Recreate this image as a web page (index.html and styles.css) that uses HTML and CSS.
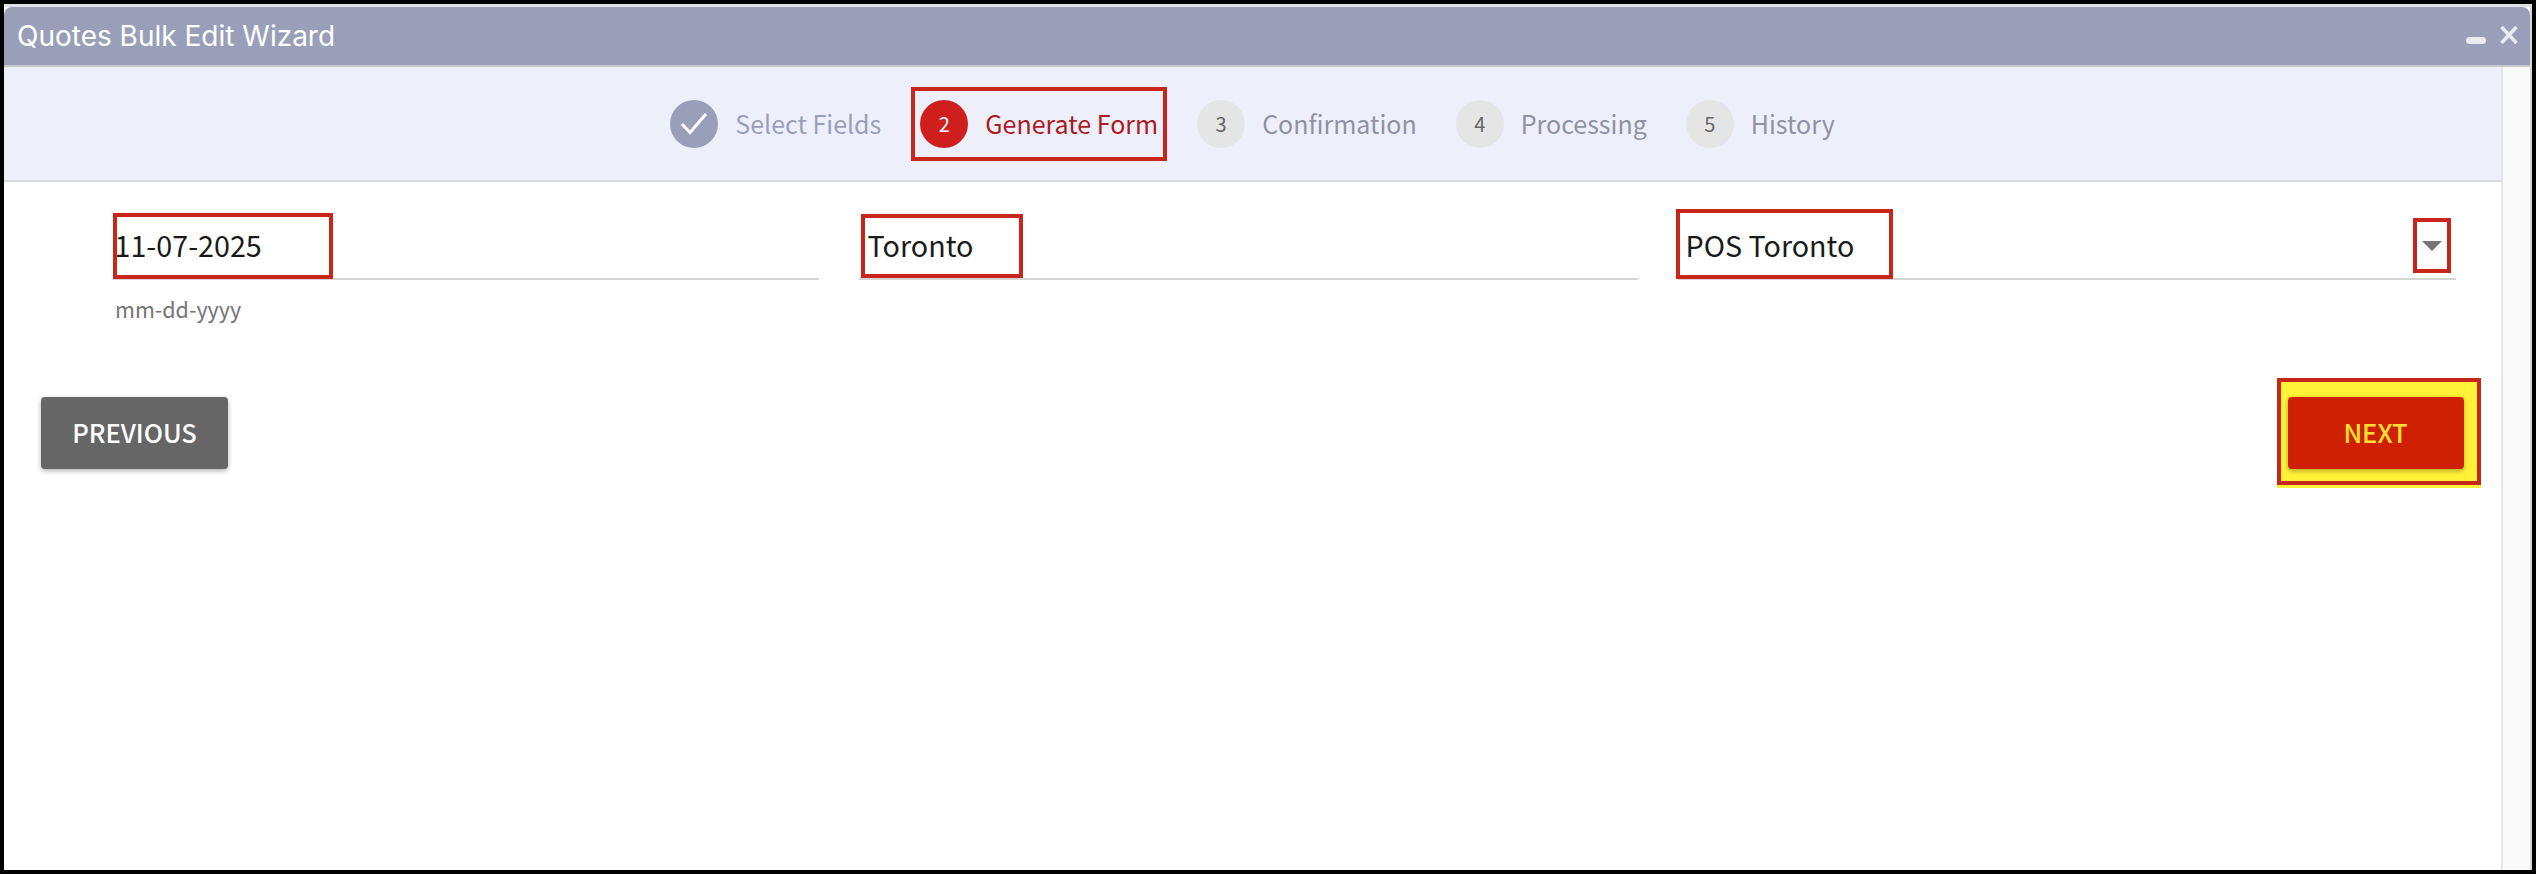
FILE: index.html
```html
<!DOCTYPE html>
<html lang="en">
<head>
<meta charset="utf-8">
<title>Quotes Bulk Edit Wizard</title>
<link rel="stylesheet" href="styles.css">
</head>
<body>
<div class="window">
  <header class="titlebar">
    <span class="title">Quotes Bulk Edit Wizard</span>
    <div class="win-actions">
      <span class="win-min"></span>
      <svg class="win-close" width="18" height="20" viewBox="0 0 18 20"><path d="M1.5 2 L16.5 18 M16.5 2 L1.5 18" fill="none" stroke="#e9ebf1" stroke-width="3.4"/></svg>
    </div>
  </header>
  <div class="frame">
    <main class="content">
      <nav class="stepper">
        <div class="step done">
          <span class="dot"><svg width="28" height="23" viewBox="0 0 28 23"><path d="M2 12 L10 20.5 L26 2" fill="none" stroke="#fff" stroke-width="3"/></svg></span>
          <span class="label">Select Fields</span>
        </div>
        <div class="step active mark-step">
          <span class="dot">2</span>
          <span class="label">Generate Form</span>
        </div>
        <div class="step">
          <span class="dot">3</span>
          <span class="label">Confirmation</span>
        </div>
        <div class="step">
          <span class="dot">4</span>
          <span class="label">Processing</span>
        </div>
        <div class="step">
          <span class="dot">5</span>
          <span class="label">History</span>
        </div>
      </nav>
      <section class="form">
        <div class="field">
          <div class="control">
            <span class="mark mark-date">11-07-2025</span>
          </div>
          <div class="hint">mm-dd-yyyy</div>
        </div>
        <div class="field">
          <div class="control">
            <span class="mark mark-city">Toronto</span>
          </div>
        </div>
        <div class="field">
          <div class="control select">
            <span class="mark mark-pos">POS Toronto</span>
            <span class="mark mark-arrow"><span class="caret"></span></span>
          </div>
        </div>
      </section>
      <div class="actions">
        <button class="btn btn-prev" type="button">PREVIOUS</button>
        <div class="next-mark">
          <button class="btn btn-next" type="button">NEXT</button>
        </div>
      </div>
    </main>
    <aside class="scrollbar"></aside>
  </div>
</div>
</body>
</html>
```
FILE: styles.css
```css
* { box-sizing: border-box; }
html, body { height: 100%; }
body {
  margin: 0;
  padding: 4px;
  background: #000;
  overflow: hidden;
  font-family: "Noto Sans CJK SC", "Noto Sans", sans-serif;
}
.window {
  height: 866px;
  display: flex;
  flex-direction: column;
  background: #fff;
  border-top: 3px solid #dfe0e4;
  border-right: 2px solid #d8d8d8;
}
.titlebar {
  height: 60px;
  flex: none;
  display: flex;
  align-items: center;
  justify-content: space-between;
  padding: 0 12px 0 13px;
  background: #9a9fb9;
  border-bottom: 2px solid #c6c8cc;
  border-radius: 8px 8px 0 0;
}
.title {
  font-family: Inter, sans-serif;
  font-size: 28px;
  color: #fff;
}
.win-actions { display: flex; align-items: center; gap: 14px; }
.win-min {
  width: 20px;
  height: 7px;
  margin-top: 8px;
  border-radius: 4px;
  background: #e9ebf1;
}
.win-close { margin-top: -3px; }
.frame { flex: 1; display: flex; min-height: 0; }
.content { flex: 1; min-width: 0; display: flex; flex-direction: column; }
.scrollbar {
  width: 29px;
  flex: none;
  background: #fafafa;
  border-left: 2px solid #e6e6e6;
}
.stepper {
  height: 115px;
  flex: none;
  display: flex;
  align-items: center;
  justify-content: center;
  gap: 21px;
  background: #edf0fb;
  border-bottom: 2px solid #d8d9dd;
}
.step {
  display: flex;
  align-items: center;
  gap: 17px;
  padding: 9px 5px;
  border: 4px solid transparent;
}
.dot {
  width: 48px;
  height: 48px;
  flex: none;
  display: flex;
  align-items: center;
  justify-content: center;
  border-radius: 50%;
  background: #e5e5e5;
  color: #666;
  font-size: 20px;
}
.label { font-size: 25px; line-height: 35px; color: #8f92a3; }
.done .dot { background: #9a9fb9; }
.done .label { color: #9a9fb9; }
.active .dot { background: #cf1f1c; color: #fff; }
.active .label { color: #ae1a1e; }
.mark-step { border-color: #c8261a; }
.form {
  display: grid;
  grid-template-columns: 706px 779px 778px;
  column-gap: 40px;
  padding: 27px 0 0 109px;
}
.control {
  height: 71px;
  display: flex;
  align-items: flex-end;
  justify-content: space-between;
  border-bottom: 2px solid #d4d4d4;
}
.mark {
  display: flex;
  align-items: center;
  border: 4.5px solid #c8261a;
  background: #fff;
  font-size: 28.7px;
  line-height: 40px;
  color: #1a1a1a;
}
.mark-date { width: 220px; height: 66px; padding: 0 0 2px 0; margin-bottom: -1px; text-indent: -2.5px; }
.mark-city { width: 162px; height: 64px; padding: 0 0 2px 2.5px; margin-left: 2px; }
.mark-pos { width: 217px; height: 70px; padding: 2px 0 0 5.5px; margin-left: -2px; margin-bottom: -1px; }
.mark-arrow { width: 38px; height: 55px; margin-right: 5px; margin-bottom: 5px; justify-content: center; }
.caret {
  width: 0;
  height: 0;
  border-left: 10px solid transparent;
  border-right: 10px solid transparent;
  border-top: 10px solid #757575;
}
.hint { margin-top: 14px; margin-left: 2px; font-size: 21.5px; line-height: 30px; color: #757575; }
.actions {
  display: flex;
  align-items: flex-start;
  justify-content: space-between;
  padding: 0 37px;
  margin-top: 54px;
}
.btn {
  height: 72px;
  padding: 0 0 3px;
  border: 0;
  border-radius: 4px;
  font-family: inherit;
  font-size: 25.5px;
  font-weight: 500;
  box-shadow: 0 2px 5px rgba(0, 0, 0, .3);
}
.btn-prev { width: 187px; margin-top: 19px; background: #666; color: #fff; }
.btn-next { width: 176px; background: #cf2003; color: #fbe033; }
.next-mark {
  width: 204px;
  height: 107px;
  margin-right: -17px;
  padding: 14.5px 6.5px 0;
  background: #fff237;
  border: 4.5px solid #c8261a;
  box-shadow: 0 3px 0 #fff237;
}
```
